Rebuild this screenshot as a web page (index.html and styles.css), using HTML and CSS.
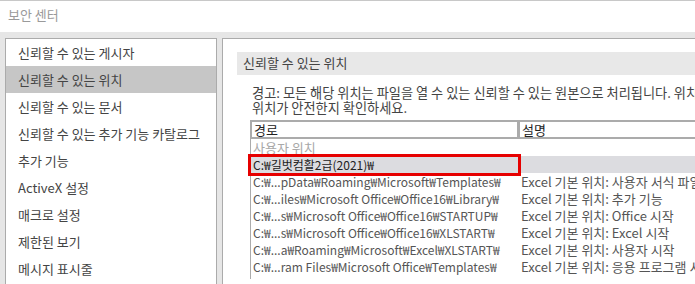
FILE: index.html
```html
<!DOCTYPE html>
<html>
<head>
  <title>보안 센터</title>
  <meta charset="utf-8">
  <link rel="stylesheet" href="styles.css">
</head>
<body>
  <div class="title-bar">보안 센터</div>

  <div class="content">
    <div class="nav">
      <div class="nav-item">신뢰할 수 있는 게시자</div>
      <div class="nav-item active">신뢰할 수 있는 위치</div>
      <div class="nav-item">신뢰할 수 있는 문서</div>
      <div class="nav-item">신뢰할 수 있는 추가 기능 카탈로그</div>
      <div class="nav-item">추가 기능</div>
      <div class="nav-item">ActiveX 설정</div>
      <div class="nav-item">매크로 설정</div>
      <div class="nav-item">제한된 보기</div>
      <div class="nav-item">메시지 표시줄</div>
    </div>

    <div class="main">
      <div class="main-heading">신뢰할 수 있는 위치</div>
      <div class="warning">
        경고: 모든 해당 위치는 파일을 열 수 있는 신뢰할 수 있는 원본으로 처리됩니다. 위치를 변경하거나 추가하는 경우 새<br>
        위치가 안전한지 확인하세요.
      </div>

      <div class="locations">
        <div class="loc-header">
          <div class="loc-cell path">경로</div>
          <div class="loc-cell desc">설명</div>
        </div>
        <div class="loc-list">
          <div class="loc-group">사용자 위치</div>
          <div class="loc-row selected">
            <div class="path marked">C:₩길벗컴활2급(2021)₩</div>
            <div class="desc"></div>
          </div>
          <div class="loc-row">
            <div class="path">C:₩...pData₩Roaming₩Microsoft₩Templates₩</div>
            <div class="desc">Excel 기본 위치: 사용자 서식 파일</div>
          </div>
          <div class="loc-row">
            <div class="path">C:₩...iles₩Microsoft Office₩Office16₩Library₩</div>
            <div class="desc">Excel 기본 위치: 추가 기능</div>
          </div>
          <div class="loc-row">
            <div class="path">C:₩...s₩Microsoft Office₩Office16₩STARTUP₩</div>
            <div class="desc">Excel 기본 위치: Office 시작</div>
          </div>
          <div class="loc-row">
            <div class="path">C:₩...s₩Microsoft Office₩Office16₩XLSTART₩</div>
            <div class="desc">Excel 기본 위치: Excel 시작</div>
          </div>
          <div class="loc-row">
            <div class="path">C:₩...a₩Roaming₩Microsoft₩Excel₩XLSTART₩</div>
            <div class="desc">Excel 기본 위치: 사용자 시작</div>
          </div>
          <div class="loc-row">
            <div class="path">C:₩...ram Files₩Microsoft Office₩Templates₩</div>
            <div class="desc">Excel 기본 위치: 응용 프로그램 서식 파일</div>
          </div>
        </div>
      </div>
    </div>
  </div>
</body>
</html>
```

FILE: styles.css
```css
* {
  margin: 0;
  padding: 0;
  box-sizing: border-box;
}

body {
  width: 695px;
  height: 284px;
  overflow: hidden;
  background: #e6e6e6;
  font-family: "Noto Sans CJK KR", "Noto Sans", sans-serif;
  font-size: 13px;
  color: #444;
}

.title-bar {
  height: 32px;
  padding: 4px 0 0 8px;
  background: #fff;
  border-top: 1px solid #c8c8c8;
  color: #9a9a9a;
  font-size: 13px;
}

.content {
  display: flex;
  gap: 5px;
  padding: 6px 0 0 5px;
}

.nav {
  flex: 0 0 212px;
  height: 260px;
  background: #fff;
  border: 1px solid #ababab;
}

.nav-item {
  height: 27px;
  line-height: 27px;
  padding-left: 12px;
  white-space: nowrap;
}

.nav-item.active {
  background: #c6c6c6;
}

.main {
  flex: 0 0 620px;
  height: 260px;
  background: #fff;
  border: 1px solid #ababab;
  padding: 13px 0 0 14px;
}

.main-heading {
  height: 23px;
  line-height: 22px;
  padding-left: 6px;
  background: #e8e8e8;
}

.warning {
  margin: 10px 0 0 15px;
  font-size: 13.2px;
  line-height: 15px;
  white-space: nowrap;
}

.locations {
  margin: 5px 0 0 13px;
}

.loc-header {
  display: flex;
  gap: 3px;
  padding: 2px;
  background: #ababab;
}

.loc-header .loc-cell {
  height: 15px;
  line-height: 15px;
  padding-left: 2px;
  background: #fff;
  color: #222;
}

.loc-cell.path {
  flex: 0 0 265px;
}

.loc-cell.desc {
  flex: 1;
}

.loc-list {
  border-left: 1px solid #ababab;
  height: 140px;
}

.loc-group {
  height: 17px;
  line-height: 17px;
  padding-left: 2px;
  color: #a8a8a8;
}

.loc-row {
  display: flex;
  height: 17px;
  line-height: 17px;
  white-space: nowrap;
  color: #555;
}

.loc-row.selected {
  background: #dcdce0;
  color: #222;
}

.loc-row .path {
  flex: 0 0 268px;
  padding-left: 2px;
  font-size: 12px;
  overflow: hidden;
}

.loc-row .desc {
  flex: 1;
  padding-left: 2px;
}

.path.marked {
  position: relative;
  overflow: visible;
}

.path.marked::after {
  content: "";
  position: absolute;
  left: -3px;
  right: -2px;
  top: -2px;
  bottom: -3px;
  border: 3px solid #e60000;
}
```
